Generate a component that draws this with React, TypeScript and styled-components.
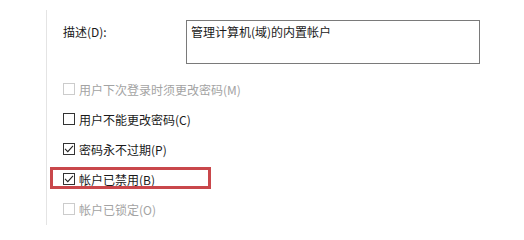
import React from 'react';
import styled, { createGlobalStyle } from 'styled-components';

const options = [
  { label: '用户下次登录时须更改密码(M)', checked: false, disabled: true },
  { label: '用户不能更改密码(C)', checked: false, disabled: false },
  { label: '密码永不过期(P)', checked: true, disabled: false },
  { label: '帐户已禁用(B)', checked: true, disabled: false, marked: true },
  { label: '帐户已锁定(O)', checked: false, disabled: true },
];

const CheckMark: React.FC = () => (
  <svg width="10" height="10" viewBox="0 0 10 10">
    <path d="M1 4.8 L3.8 7.6 L9 1.8" fill="none" stroke="#222" strokeWidth="1.1" />
  </svg>
);

const App: React.FC = () => {
  return (
    <>
      <GlobalStyle />
      <Page>
        <Panel>
          <DescRow>
            <Label>描述(D):</Label>
            <TextBox>管理计算机(域)的内置帐户</TextBox>
          </DescRow>
          <OptionList>
            {options.map((o) => (
              <Option key={o.label} $disabled={o.disabled} $marked={o.marked}>
                <Box $disabled={o.disabled}>{o.checked && <CheckMark />}</Box>
                {o.label}
              </Option>
            ))}
          </OptionList>
        </Panel>
      </Page>
    </>
  );
};

const GlobalStyle = createGlobalStyle`
  html, body {
    margin: 0;
    padding: 0;
    background: #fff;
  }
  body {
    font-family: "Noto Sans CJK SC", "Noto Sans", sans-serif;
    font-size: 12px;
    color: #1a1a1a;
  }
`;

const Page = styled.div`
  width: 524px;
  height: 240px;
  padding: 10px 0 0 46px;
  box-sizing: border-box;
  background: #fff;
`;

const Panel = styled.div`
  height: 215px;
  border-left: 1px solid #e4e4e4;
  padding: 10px 0 0 16px;
  box-sizing: border-box;
  display: flex;
  flex-direction: column;
  gap: 10px;
`;

const DescRow = styled.div`
  display: flex;
  align-items: flex-start;
`;

const Label = styled.div`
  width: 123px;
  padding-top: 4px;
  line-height: 16px;
`;

const TextBox = styled.div`
  width: 294px;
  height: 44px;
  box-sizing: border-box;
  border: 1px solid #7a7a7a;
  padding: 3px 4px;
  line-height: 16px;
`;

const OptionList = styled.div`
  display: flex;
  flex-direction: column;
`;

const Option = styled.div<{ $disabled?: boolean; $marked?: boolean }>`
  position: relative;
  height: 30px;
  display: flex;
  align-items: center;
  color: ${(p) => (p.$disabled ? '#a3a3a3' : '#1a1a1a')};

  &::after {
    content: '';
    display: ${(p) => (p.$marked ? 'block' : 'none')};
    position: absolute;
    left: -13px;
    top: 3px;
    width: 161px;
    height: 22px;
    box-sizing: border-box;
    border: 3px solid #c9474b;
  }
`;

const Box = styled.span<{ $disabled?: boolean }>`
  width: 12px;
  height: 12px;
  box-sizing: border-box;
  border: 1px solid ${(p) => (p.$disabled ? '#cccccc' : '#333333')};
  margin-right: 4px;
  display: flex;
  align-items: center;
  justify-content: center;
  background: #fff;
`;

export default App;
